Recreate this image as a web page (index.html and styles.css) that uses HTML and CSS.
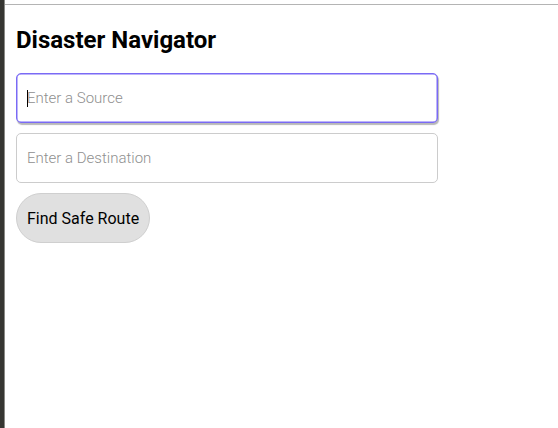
FILE: index.html
```html
<!DOCTYPE html>
<html>
<head>
<meta charset="utf-8">
<link rel="stylesheet" href="styles.css">
</head>
<body>
<div class="frame">
  <div class="side"></div>
  <div class="main">
    <div class="topline"></div>
    <div class="content">
      <h1 class="title">Disaster Navigator</h1>
      <div class="field-wrap">
        <input class="field focused" type="text" placeholder="Enter a Source">
        <span class="caret"></span>
      </div>
      <input class="field" type="text" placeholder="Enter a Destination">
      <button class="btn">Find Safe Route</button>
    </div>
  </div>
</div>
</body>
</html>
```

FILE: styles.css
```css
html, body {
  margin: 0;
  padding: 0;
  height: 100%;
  background: #ffffff;
  font-family: Roboto, "Liberation Sans", sans-serif;
}
.frame {
  display: flex;
  height: 100%;
}
.side {
  width: 4px;
  background: #363632;
  border-right: 1px solid #8a8a86;
  flex: none;
}
.main {
  flex: 1;
  display: flex;
  flex-direction: column;
}
.topline {
  height: 4px;
  border-bottom: 1px solid #b4b4b4;
}
.content {
  display: flex;
  flex-direction: column;
  align-items: flex-start;
  padding: 0 0 0 11px;
}
.title {
  margin: 21px 0 19px 0;
  font-size: 24px;
  font-weight: 700;
  line-height: 28px;
  color: #000;
}
.field-wrap {
  position: relative;
  display: flex;
}
.caret {
  position: absolute;
  left: 11px;
  top: 17px;
  width: 1px;
  height: 17px;
  background: #000;
}
.field {
  box-sizing: border-box;
  width: 422px;
  height: 50px;
  margin: 0 0 10px 0;
  padding: 0 10px;
  border: 1px solid #cccccc;
  border-radius: 5px;
  font-family: Roboto, "Liberation Sans", sans-serif;
  font-size: 15px;
  font-weight: 300;
  color: #000;
  outline: none;
  background: #fff;
}
.field::placeholder {
  color: #8f8f8f;
  font-weight: 300;
}
.field.focused {
  border: 1px solid #7a6af5;
  box-shadow: 1px 2px 1px #b8b8b8, inset 0 0 0 0.5px #7a6af5;
}
.btn {
  box-sizing: border-box;
  height: 50px;
  padding: 0 10px;
  border: 1px solid #cfcfcf;
  border-radius: 25px;
  background: #e0e0e0;
  font-family: Roboto, "Liberation Sans", sans-serif;
  font-size: 16px;
  color: #000;
}
```
